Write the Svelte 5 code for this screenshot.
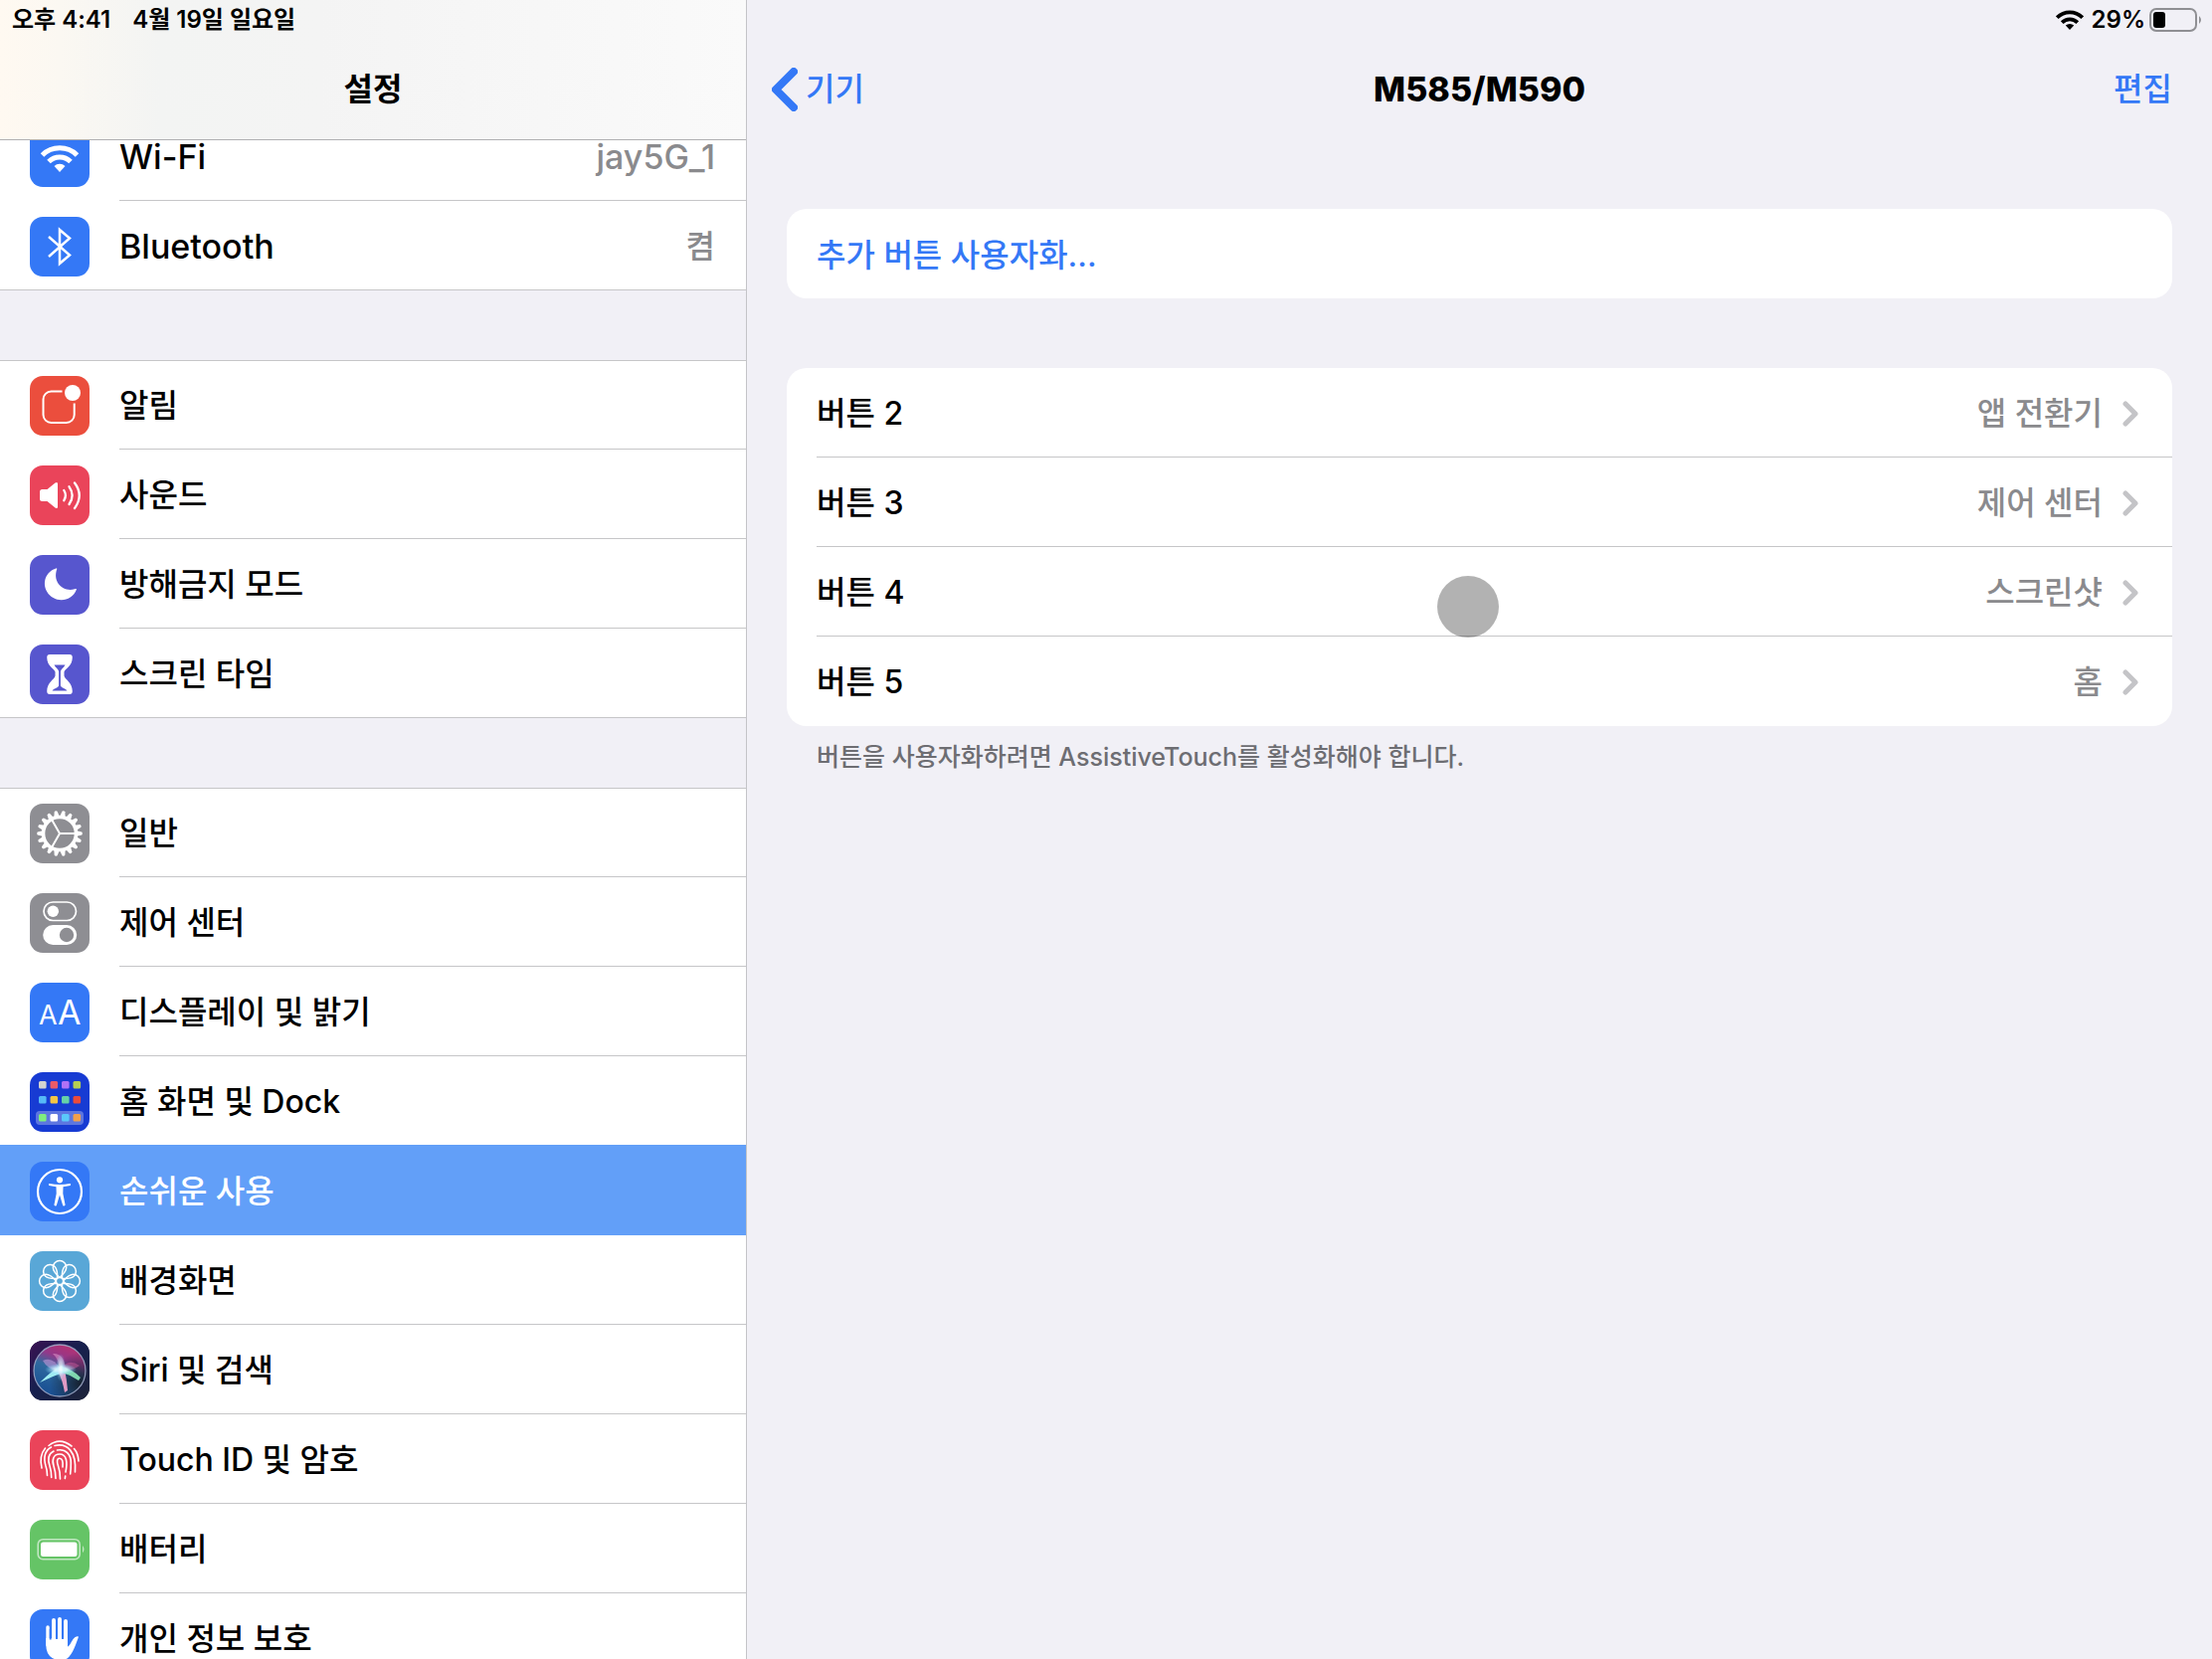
<script>
  const groups = [
    [
      { icon: 'wifi', color: '#3478f6', label: 'Wi-Fi', value: 'jay5G_1' },
      { icon: 'bluetooth', color: '#3478f6', label: 'Bluetooth', value: '켬' }
    ],
    [
      { icon: 'bell', color: '#eb4e3d', label: '알림' },
      { icon: 'sound', color: '#ea445a', label: '사운드' },
      { icon: 'moon', color: '#5756ce', label: '방해금지 모드' },
      { icon: 'hourglass', color: '#5756ce', label: '스크린 타임' }
    ],
    [
      { icon: 'gear', color: '#8e8e93', label: '일반' },
      { icon: 'toggles', color: '#8e8e93', label: '제어 센터' },
      { icon: 'display', color: '#3478f6', label: '디스플레이 및 밝기' },
      { icon: 'home', color: '#173bd3', label: '홈 화면 및 Dock' },
      { icon: 'access', color: '#3478f6', label: '손쉬운 사용', selected: true },
      { icon: 'flower', color: '#59a7d7', label: '배경화면' },
      { icon: 'siri', color: '#1b1c3f', label: 'Siri 및 검색' },
      { icon: 'touch', color: '#ea445a', label: 'Touch ID 및 암호' },
      { icon: 'battery', color: '#65c466', label: '배터리' },
      { icon: 'hand', color: '#3478f6', label: '개인 정보 보호' }
    ]
  ];

  const buttons = [
    { label: '버튼 2', value: '앱 전환기' },
    { label: '버튼 3', value: '제어 센터' },
    { label: '버튼 4', value: '스크린샷' },
    { label: '버튼 5', value: '홈' }
  ];

  // Latin-only strings are set slightly larger so they balance with Hangul.
  const isLatin = (s) => /^[\x20-\x7e]+$/.test(s);

  const teeth = Array.from({ length: 18 }, (_, i) => i * 20);
  const petals = Array.from({ length: 8 }, (_, i) => i * 45);
  const apps = [
    ['#d4d4d0', '#eb5b67', '#b072f6', '#b6d052'],
    ['#56b9f7', '#f5c543', '#66d1a8', '#ea4b3c'],
    ['#7fee7f', '#ffffff', '#5ac8fa', '#f2a04c']
  ];
  const appRows = [9, 24, 42];
</script>

{#snippet glyph(name)}
  {#if name === 'wifi'}
    <g fill="none" stroke="#fff" stroke-width="5">
      <path d="M12.500 28 A25 25 0 0 1 47.500 28" />
      <path d="M19 34.500 A15.500 15.500 0 0 1 41 34.500" />
    </g>
    <path d="M24.500 39 A8 8 0 0 1 35.500 39 L30 45 Z" fill="#fff" />
  {:else if name === 'bluetooth'}
    <path d="M19 20 L40 38.500 L30 47 V13 L40 21.500 L19 40" fill="none" stroke="#fff" stroke-width="2.500" />
  {:else if name === 'bell'}
    <path d="M32.500 15.500 H21.500 a8 8 0 0 0 -8 8 V39 a8 8 0 0 0 8 8 H36.700 a8 8 0 0 0 8 -8 V27.500" fill="none" stroke="#fff" stroke-width="2" />
    <circle cx="43" cy="17" r="8" fill="#fff" />
  {:else if name === 'sound'}
    <path d="M10 26.500 q0-2.500 2.500-2.500 h5 l8-6.500 q2.500-1.500 2.500 1 v23 q0 2.500-2.500 1 l-8-6.500 h-5 q-2.500 0-2.500-2.500z" fill="#fff" />
    <g fill="none" stroke="#fff" stroke-width="2.300" stroke-linecap="round">
      <path d="M34.300 25 Q37.500 30 34.300 35.200" />
      <path d="M39.500 21.300 Q45.800 30 39.500 39" />
      <path d="M45 17.500 Q54.500 30 45 43" />
    </g>
  {:else if name === 'moon'}
    <path d="M27 13.200 C16 16 12 28 17.300 37 C24 48.500 42 48 47 34.500 C46.500 34 46 34 45 34.300 C33 37.500 22.500 27 27.300 14 Z" fill="#fff" />
  {:else if name === 'hourglass'}
    <path d="M20 10 H40 Q42.800 10 42.800 13 C42.800 22 35 24.500 34.500 27.500 V31.500 C35 35 42.800 38 42.800 47 Q42.800 50 40 50 H20 Q17.200 50 17.200 47 C17.200 38 25 35 25.500 31.500 V27.500 C25 24.500 17.200 22 17.200 13 Q17.200 10 20 10Z" fill="#fff" />
    <path d="M24.500 20.500 H35.500 C34.500 23 31.500 24.500 30.900 27 V41.500 C32 44 36 44 37.500 46.500 H22.500 C24 44 28 44 29.100 41.500 V27 C28.500 24.500 25.500 23 24.500 20.500Z" fill="#5756ce" />
  {:else if name === 'gear'}
    <g fill="#fff">
      {#each teeth as a}
        <path d="M47 27.300 L52.300 28.500 Q53.600 30 52.300 31.500 L47 32.700Z" transform="rotate({a} 30 30)" />
      {/each}
    </g>
    <circle cx="30" cy="30" r="16.500" fill="none" stroke="#fff" stroke-width="3.600" />
    <path d="M30 30 H46 M30 30 L22 16.100 M30 30 L22 43.900" stroke="#fff" stroke-width="2" />
  {:else if name === 'toggles'}
    <rect x="14" y="9" width="32.500" height="18.500" rx="9.250" fill="none" stroke="#fff" stroke-width="1.700" />
    <circle cx="23.300" cy="18.200" r="5.700" fill="#fff" />
    <rect x="13.200" y="32" width="34" height="20" rx="10" fill="#fff" />
    <circle cx="37" cy="42" r="7.200" fill="#8e8e93" />
  {:else if name === 'display'}
    <text x="9" y="42" class="small-a">A</text>
    <text x="28" y="42" class="large-a">A</text>
  {:else if name === 'home'}
    <rect x="6" y="39" width="48" height="14" rx="4" fill="#fff" opacity="0.300" />
    {#each apps as row, r}
      {#each row as fill, c}
        <rect x={9 + c * 11.500} y={appRows[r]} width="7.600" height="7.600" rx="1.500" {fill} />
      {/each}
    {/each}
  {:else if name === 'access'}
    <circle cx="30" cy="30" r="22" fill="none" stroke="#fff" stroke-width="2.200" />
    <circle cx="30" cy="18.300" r="3.100" fill="#fff" />
    <path d="M19.500 22 Q30 24 40.500 22 Q41.800 22.800 40.700 23.900 L33.500 25.300 L33.300 32 L35.600 43.500 Q34.500 45.300 33.200 44 L30 33.500 L26.800 44 Q25.500 45.300 24.400 43.500 L26.700 32 L26.500 25.300 L19.300 23.900 Q18.200 22.800 19.500 22Z" fill="#fff" />
  {:else if name === 'flower'}
    <g fill="none" stroke="#fff" stroke-width="1.500">
      {#each petals as a}
        <path d="M30 26.500 C25.500 22.500 23.300 20 23.300 16.300 A6.700 6.700 0 0 1 36.700 16.300 C36.700 20 34.500 22.500 30 26.500" transform="rotate({a} 30 30)" />
      {/each}
      <circle cx="30" cy="30" r="3.600" />
    </g>
  {:else if name === 'siri'}
    <defs>
      <linearGradient id="siri-bg" x1="0" y1="0" x2="1" y2="1">
        <stop offset="0" stop-color="#3b1152" />
        <stop offset="0.450" stop-color="#17204f" />
        <stop offset="1" stop-color="#1d2338" />
      </linearGradient>
      <linearGradient id="siri-orb" x1="0.700" y1="0" x2="0.300" y2="1">
        <stop offset="0" stop-color="#b8306f" />
        <stop offset="0.280" stop-color="#93388a" />
        <stop offset="0.500" stop-color="#2f6a9f" />
        <stop offset="1" stop-color="#174d92" />
      </linearGradient>
      <radialGradient id="siri-glow">
        <stop offset="0" stop-color="#fff" />
        <stop offset="0.400" stop-color="#d5f6ff" stop-opacity="0.850" />
        <stop offset="1" stop-color="#7fd8ff" stop-opacity="0" />
      </radialGradient>
      <radialGradient id="siri-shade" cx="0.900" cy="0.750" r="0.600">
        <stop offset="0" stop-color="#15202f" />
        <stop offset="1" stop-color="#15202f" stop-opacity="0" />
      </radialGradient>
    </defs>
    <rect width="60" height="60" fill="url(#siri-bg)" />
    <circle cx="30" cy="30" r="26" fill="url(#siri-orb)" />
    <circle cx="30" cy="30" r="26" fill="url(#siri-shade)" />
    <path d="M13 20 Q23 15 31 29 Q19 31 13 20Z" fill="#c9a0e0" opacity="0.550" />
    <path d="M23 13 Q34 12 36 28 L30 29 Q29 18 23 13Z" fill="#e6a0d2" opacity="0.500" />
    <path d="M31 29 Q38 17 50 25 Q42 31 31 29Z" fill="#d05a9c" opacity="0.500" />
    <path d="M10 42 Q22 30 32 25 L36 31 Q22 36 10 42Z" fill="#a5f5f5" opacity="0.950" />
    <path d="M28 30 Q33 40 35 52 L38 50 Q37 38 35 29Z" fill="#f5a5cf" opacity="0.900" />
    <path d="M31 26 Q44 29 51 37 L49 40 Q40 34 30 31Z" fill="#8be8b8" opacity="0.900" />
    <ellipse cx="31" cy="29" rx="16" ry="6" fill="url(#siri-glow)" />
    <ellipse cx="31" cy="27" rx="5" ry="14" fill="url(#siri-glow)" opacity="0.700" />
    <circle cx="30" cy="30" r="26" fill="none" stroke="#a9b3cf" stroke-width="1.300" opacity="0.800" />
  {:else if name === 'touch'}
    <g fill="none" stroke="#fff" stroke-width="1.600" stroke-linecap="round">
      <path d="M19 15.500 Q30 6.500 42 16" />
      <path d="M15.500 18 Q9 26 12 38" />
      <path d="M44.500 18.500 Q48.500 23 49 31" />
      <path d="M25 15.500 C38 12.500 47 22 45.500 42" />
      <path d="M21.500 17 C13.500 21.500 14 29 16 36 Q17.500 40 17.500 45.500" />
      <path d="M27.500 20 C36 18.500 41.500 24 41.300 33 Q41.300 39 40.700 44" />
      <path d="M24 21 C18 24 18 30 20 36 Q21.700 41 21.700 47.500" />
      <path d="M36 42 C38 32 37 24 30 24 C23.500 24 22 30 24 36 Q26 42 26 48.500" />
      <path d="M35.300 48.500 L35.700 46" />
      <path d="M33 37 C33.500 31 32.500 28.200 29.800 28.200 C27 28.200 27 32 28.500 36 Q30.700 42 30.500 49" />
    </g>
  {:else if name === 'battery'}
    <rect x="8.200" y="19.700" width="42" height="20" rx="5" fill="none" stroke="#fff" stroke-width="1.600" opacity="0.600" />
    <rect x="11" y="22.500" width="36.500" height="14.500" rx="2.500" fill="#fff" />
    <path d="M53 26 Q56 29.700 53 33.300Z" fill="#fff" opacity="0.600" />
  {:else if name === 'hand'}
    <g stroke="#fff" stroke-linecap="round" fill="none">
      <path d="M18 18 V36" stroke-width="3.400" />
      <path d="M24 11 V32" stroke-width="3.900" />
      <path d="M30 10 V32" stroke-width="3.900" />
      <path d="M36 12 V33" stroke-width="3.900" />
    </g>
    <path d="M16.300 29 H38 V37.500 C40 37 41.500 33 43.500 30 Q46 26.500 49 27.500 C47 33 43 46 37.500 49.500 Q30 53 22.500 49 Q16.300 45 16.300 36Z" fill="#fff" />
    <path d="M20.700 20 V30.500 M27 14 V30 M33 14 V30" stroke="#3478f6" stroke-width="1.900" />
  {/if}
{/snippet}

<div class="screen">
  <aside>
    <header class="side-head">
      <div class="status"><span>오후 4:41</span><span>4월 19일 일요일</span></div>
      <h2>설정</h2>
    </header>
    <nav aria-label="설정">
      <div class="scroll">
        {#each groups as group}
          <ul class="group">
            {#each group as item}
              <li class:selected={item.selected}>
                <a href="#{item.icon}" aria-current={item.selected ? 'page' : undefined}>
                  <svg class="icon" viewBox="0 0 60 60" aria-hidden="true">
                    <clipPath id="clip-{item.icon}"><rect width="60" height="60" rx="13" /></clipPath>
                    <g clip-path="url(#clip-{item.icon})">
                      <rect width="60" height="60" fill={item.color} />
                      {@render glyph(item.icon)}
                    </g>
                  </svg>
                  <span class="cell">
                    <span class:latin={isLatin(item.label)}>{item.label}</span>
                    {#if item.value}<span class="value" class:latin={isLatin(item.value)}>{item.value}</span>{/if}
                  </span>
                </a>
              </li>
            {/each}
          </ul>
        {/each}
      </div>
    </nav>
  </aside>

  <main>
    <div class="status right">
      <svg class="wifi" viewBox="0 0 28 20" aria-hidden="true">
        <g fill="none" stroke="#000" stroke-width="3.800">
          <path d="M1.300 7.700 A18 18 0 0 1 26.700 7.700" />
          <path d="M6.200 12.600 A11 11 0 0 1 21.800 12.600" />
        </g>
        <path d="M9.800 15.600 A6 6 0 0 1 18.200 15.600 L14 20Z" />
      </svg>
      <span>29%</span>
      <svg class="power" viewBox="0 0 54 24" aria-hidden="true">
        <rect x="1" y="1" width="46" height="22" rx="6" fill="none" stroke="#8f8f93" stroke-width="2" />
        <rect x="4" y="4" width="12" height="16" rx="3" />
        <path d="M50 8 Q54 12 50 16Z" fill="#8f8f93" />
      </svg>
    </div>
    <header class="bar">
      <a class="back" href="#devices">
        <svg viewBox="0 0 26 44" aria-hidden="true"><path d="M22 4 L4 22 L22 40" fill="none" stroke="currentColor" stroke-width="8" stroke-linecap="round" stroke-linejoin="round" /></svg>
        <span>기기</span>
      </a>
      <h1>M585/M590</h1>
      <button class="edit" type="button">편집</button>
    </header>

    <div class="content">
      <section class="card">
        <button class="customize" type="button">추가 버튼 사용자화...</button>
      </section>
      <section class="card">
        {#each buttons as b}
          <a class="option" href="#{b.label.replace(' ', '-')}">
            <span>{b.label}</span>
            <span class="value">{b.value}</span>
            <svg class="chevron" viewBox="0 0 16 26" aria-hidden="true"><path d="M3 3 L13 13 L3 23" fill="none" stroke="#c4c4c7" stroke-width="5" stroke-linecap="round" stroke-linejoin="round" /></svg>
          </a>
        {/each}
        <span class="touch-point"></span>
      </section>
      <p class="note">버튼을 사용자화하려면 AssistiveTouch를 활성화해야 합니다.</p>
    </div>
  </main>
</div>

<style>
  :global(body) {
    margin: 0;
    background: #f1f0f6;
  }
  .screen {
    display: flex;
    height: 100vh;
    overflow: hidden;
    background: #f1f0f6;
    color: #000;
    font-family: Inter, 'Noto Sans CJK KR', sans-serif;
    font-size: 32px;
    line-height: 32px;
    font-weight: 500;
  }
  a, button {
    color: inherit;
    font: inherit;
    text-decoration: none;
    background: none;
    border: 0;
    padding: 0;
    text-align: left;
    cursor: pointer;
  }
  h1, h2 {
    margin: 0;
    font-size: 32px;
    line-height: 44px;
    font-weight: 700;
  }
  h1 {
    font-size: 34px;
    font-weight: 800;
  }
  .latin {
    font-size: 34px;
  }
  aside {
    flex: 0 0 750px;
    display: flex;
    flex-direction: column;
    min-height: 0;
    border-right: 1px solid #c4c4c8;
  }
  .side-head {
    flex: none;
    padding-bottom: 28px;
    border-bottom: 1px solid #b0b0b2;
    background: linear-gradient(90deg, #fff9f1 0, #fbf8f2 60px, #f3f4f3 160px, #f4f4f4 320px, #f8f8f8 620px, #fafafa 100%);
    text-align: center;
  }
  .status {
    display: flex;
    align-items: center;
    gap: 22px;
    height: 40px;
    padding-left: 12px;
    font-size: 24px;
    line-height: 40px;
    font-weight: 600;
  }
  .side-head h2 {
    padding-top: 28px;
  }
  nav {
    flex: 1;
    min-height: 0;
    overflow: hidden;
  }
  .scroll {
    margin-top: -29px;
    display: flex;
    flex-direction: column;
    gap: 70px;
  }
  .group {
    margin: 0;
    padding: 0;
    list-style: none;
    background: #fff;
    box-shadow: inset 0 1px #c6c6c8;
  }
  li a {
    display: flex;
    align-items: flex-start;
    gap: 30px;
    height: 90px;
    box-sizing: border-box;
    padding-left: 30px;
  }
  li:last-child {
    box-shadow: inset 0 -1px #c6c6c8;
  }
  .icon {
    flex: none;
    width: 60px;
    height: 60px;
    margin-top: 16px;
  }
  .cell {
    flex: 1;
    display: flex;
    align-items: center;
    justify-content: space-between;
    height: 90px;
    box-sizing: border-box;
    padding: 3px 31px 0 0;
    border-bottom: 1px solid #c6c6c8;
  }
  .value {
    color: #8a8a8d;
  }
  .selected {
    position: relative;
    background: #629ff8;
    box-shadow: 0 -1px #629ff8;
    color: #fff;
  }
  .selected .cell {
    border-color: transparent;
  }
  .small-a, .large-a {
    fill: #fff;
    font-family: Inter, sans-serif;
    font-weight: 400;
    font-size: 27px;
  }
  .large-a {
    font-size: 34px;
  }
  main {
    flex: 1;
    min-width: 0;
  }
  .right {
    justify-content: flex-end;
    gap: 4px;
    padding: 0 9px 0 0;
  }
  .wifi {
    width: 28px;
    height: 20px;
    margin-right: 4px;
  }
  .power {
    width: 54px;
    height: 24px;
  }
  .bar {
    display: grid;
    grid-template-columns: 1fr auto 1fr;
    align-items: center;
    height: 100px;
    padding: 0 40px;
  }
  .back, .edit, .customize {
    color: #3478f6;
  }
  .back {
    display: flex;
    align-items: center;
    gap: 8px;
    margin-left: -15px;
  }
  .back svg {
    width: 26px;
    height: 44px;
  }
  .edit {
    justify-self: end;
  }
  .content {
    display: flex;
    flex-direction: column;
    gap: 70px;
    padding: 70px 40px 0;
  }
  .card {
    position: relative;
    border-radius: 20px;
    background: #fff;
  }
  .customize {
    width: 100%;
    height: 90px;
    padding: 3px 30px 0;
  }
  .option {
    display: flex;
    align-items: center;
    height: 90px;
    box-sizing: border-box;
    margin-left: 30px;
    padding: 2px 34px 0 0;
    border-bottom: 1px solid #c6c6c8;
  }
  .option:nth-child(4) {
    border-color: transparent;
  }
  .option .value {
    margin-left: auto;
  }
  .chevron {
    width: 16px;
    height: 26px;
    margin-left: 20px;
  }
  .touch-point {
    position: absolute;
    left: 654px;
    top: 209px;
    width: 62px;
    height: 62px;
    border-radius: 50%;
    background: rgba(0, 0, 0, 0.3);
    pointer-events: none;
  }
  .note {
    margin: -56px 30px 0;
    color: #6d6d72;
    font-size: 25px;
    line-height: 34px;
  }
</style>
